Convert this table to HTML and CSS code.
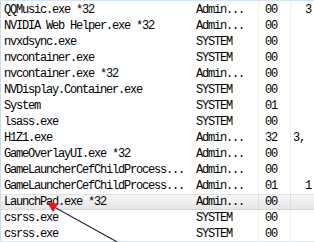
FILE: index.html
```html
<!DOCTYPE html>
<html>
<head>
<meta charset="utf-8">
<link rel="stylesheet" href="styles.css">
</head>
<body>
<div class="list">
  <div class="row"><span class="c name">QQMusic.exe *32</span><span class="c user">Admin...</span><span class="c cpu">00</span><span class="c mem">  3</span></div>
  <div class="row"><span class="c name">NVIDIA Web Helper.exe *32</span><span class="c user">Admin...</span><span class="c cpu">00</span><span class="c mem"></span></div>
  <div class="row"><span class="c name">nvxdsync.exe</span><span class="c user">SYSTEM</span><span class="c cpu">00</span><span class="c mem"></span></div>
  <div class="row"><span class="c name">nvcontainer.exe</span><span class="c user">SYSTEM</span><span class="c cpu">00</span><span class="c mem"></span></div>
  <div class="row"><span class="c name">nvcontainer.exe *32</span><span class="c user">Admin...</span><span class="c cpu">00</span><span class="c mem"></span></div>
  <div class="row"><span class="c name">NVDisplay.Container.exe</span><span class="c user">SYSTEM</span><span class="c cpu">00</span><span class="c mem"></span></div>
  <div class="row"><span class="c name">System</span><span class="c user">SYSTEM</span><span class="c cpu">01</span><span class="c mem"></span></div>
  <div class="row"><span class="c name">lsass.exe</span><span class="c user">SYSTEM</span><span class="c cpu">00</span><span class="c mem"></span></div>
  <div class="row"><span class="c name">H1Z1.exe</span><span class="c user">Admin...</span><span class="c cpu">32</span><span class="c mem">3,</span></div>
  <div class="row"><span class="c name">GameOverlayUI.exe *32</span><span class="c user">Admin...</span><span class="c cpu">00</span><span class="c mem"></span></div>
  <div class="row"><span class="c name">GameLauncherCefChildProcess...</span><span class="c user">Admin...</span><span class="c cpu">00</span><span class="c mem"></span></div>
  <div class="row"><span class="c name">GameLauncherCefChildProcess...</span><span class="c user">Admin...</span><span class="c cpu">01</span><span class="c mem">  1</span></div>
  <div class="row selected"><span class="c name">LaunchPad.exe *32</span><span class="c user">Admin...</span><span class="c cpu">00</span><span class="c mem"></span></div>
  <div class="row"><span class="c name">csrss.exe</span><span class="c user">SYSTEM</span><span class="c cpu">00</span><span class="c mem"></span></div>
  <div class="row"><span class="c name">csrss.exe</span><span class="c user">SYSTEM</span><span class="c cpu">00</span><span class="c mem"></span></div>
</div>
<svg class="arrow" width="314" height="242" viewBox="0 0 314 242">
  <line x1="56" y1="208" x2="119" y2="243" stroke="#2b2550" stroke-width="1.2"/>
  <path d="M47 202 L58 204 Q56 208 53 212 Z" fill="#e0141c"/>
</svg>
</body>
</html>
```
FILE: styles.css
```css
html, body {
  margin: 0;
  padding: 0;
  background: #ffffff;
  width: 314px;
  height: 242px;
  overflow: hidden;
}

.list {
  position: relative;
  width: 314px;
  height: 242px;
  box-sizing: border-box;
  border-left: 1px solid #c6dcef;
  border-top: 1px solid #d4e6f4;
  border-bottom: 1px solid #d4e6f4;
  padding-top: 1px;
  font-family: "Liberation Mono", "DejaVu Sans Mono", monospace;
  font-size: 12px;
  letter-spacing: -1.2px;
  color: #000;
}

.row {
  display: grid;
  grid-template-columns: 191px 66px 32px 1fr;
  height: 16px;
  line-height: 16px;
  box-sizing: border-box;
}

.c {
  white-space: pre;
  overflow: hidden;
}

.name {
  padding-left: 3px;
}

.user {
  padding-left: 4px;
}

.cpu {
  padding-left: 6px;
  border-left: 1px solid #f1f1f1;
}

.mem {
  padding-left: 2px;
  border-left: 1px solid #f1f1f1;
}

.selected {
  background: linear-gradient(#f6f6f6, #e6e6e6);
  border-top: 1px solid #e2e2e2;
  border-bottom: 1px solid #d6d6d6;
  line-height: 14px;
}

.selected .cpu,
.selected .mem {
  border-left-color: #dadada;
}

.arrow {
  position: absolute;
  left: 0;
  top: 0;
  pointer-events: none;
}
```
